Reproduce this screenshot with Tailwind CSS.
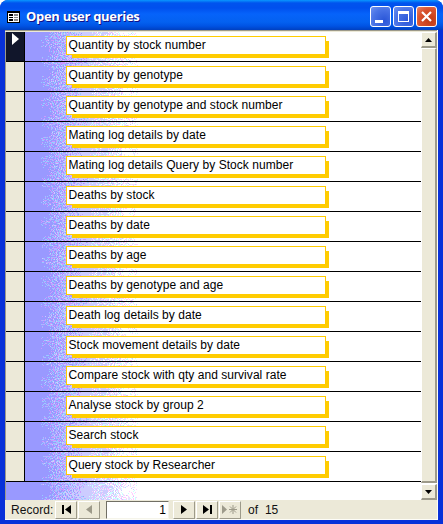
<!DOCTYPE html>
<html><head><meta charset="utf-8"><script src="https://cdn.jsdelivr.net/npm/@tailwindcss/browser@4"></script></head>
<body class="bg-white overflow-hidden">
<svg width="0" height="0" class="absolute"><filter id="dither" x="0" y="0" width="100%" height="100%" color-interpolation-filters="sRGB"><feTurbulence type="fractalNoise" baseFrequency="0.95" numOctaves="1" seed="4" stitchTiles="noStitch" result="n"/><feColorMatrix in="n" type="matrix" values="3.2 0 0 0 -1.1  0 3.2 0 0 -1.1  0 0 0 0 0.5  0 0 0 0 1" result="m"/><feComposite in="SourceGraphic" in2="m" operator="arithmetic" k1="0" k2="1" k3="0.2" k4="-0.1" result="c"/><feComponentTransfer in="c"><feFuncR type="discrete" tableValues=".6 .6 .6 .6 .6 .6 .6 .8 .8 1"/><feFuncG type="discrete" tableValues=".6 .6 .6 .6 .6 .6 .6 .8 .8 1"/><feFuncB type="discrete" tableValues="1"/></feComponentTransfer></filter></svg>
<div class="w-[443px] h-[524px] flex flex-col rounded-t-[8px] overflow-hidden bg-[#0831d9] font-['Liberation_Sans',sans-serif] text-[12px] tracking-[0.05px] text-black">
  <div class="h-[30px] shrink-0 flex items-center pl-[7px] pr-[6px] pt-[3px] bg-[linear-gradient(180deg,#0997ff_0px,#0053ee_3px,#0050ee_8px,#0663fa_14px,#0461f0_22px,#0053e4_26px,#0040c0_30px)]">
    <svg width="13" height="12" viewBox="0 0 13 12" class="mr-[6px]"><rect width="13" height="12" fill="#000"/><rect x="1" y="2" width="11" height="9" fill="#fff"/><rect x="2" y="3" width="4" height="2" fill="#000"/><rect x="7" y="3" width="4" height="2" fill="#888"/><rect x="2" y="6" width="4" height="1" fill="#000"/><rect x="7" y="6" width="4" height="1" fill="#888"/><rect x="2" y="8" width="4" height="2" fill="#000"/><rect x="7" y="8" width="4" height="2" fill="#888"/></svg>
    <span class="font-bold text-[13px] tracking-[-0.3px] text-white [text-shadow:1px_1px_0_#0f1089] font-['Open_Sans',sans-serif]">Open user queries</span>
    <div class="ml-auto flex gap-[2px] mt-[-1px]">
      <div class="w-[21px] h-[21px] rounded-[3px] border border-white bg-[radial-gradient(circle_at_70%_70%,#2a56d8,#4a74e6_60%,#6f93f0)] flex items-end pl-[4px] pb-[3px]"><div class="w-[8px] h-[3px] bg-white"></div></div>
      <div class="w-[21px] h-[21px] rounded-[3px] border border-white bg-[radial-gradient(circle_at_70%_70%,#2a56d8,#4a74e6_60%,#6f93f0)] flex items-center justify-center"><div class="w-[11px] h-[11px] border border-white border-t-[3px]"></div></div>
      <div class="w-[21px] h-[21px] rounded-[3px] border border-white bg-[radial-gradient(circle_at_70%_70%,#c03a14,#d9532f_60%,#e8866a)] flex items-center justify-center"><svg width="11" height="11" viewBox="0 0 11 11"><path d="M1 1L10 10M10 1L1 10" stroke="#fff" stroke-width="2.2"/></svg></div>
    </div>
  </div>
  <div class="mx-[5px] mb-[4px] flex-1 flex flex-col bg-[#ece9d8] min-h-0 border-r border-b border-[#fdfdf8]">
    <div class="h-[2px] bg-[#9d9a8a] border-b border-b-[#ece9d8] shrink-0"></div>
    <div class="flex h-[468px] shrink-0 border-l border-[#9d9a8a]">
      <div class="relative flex-1 flex flex-col">
        <div class="absolute inset-0 bg-[linear-gradient(90deg,#9494ff_0px,#9494ff_30px,#ffffff_132px)] [filter:url(#dither)]"></div>
        <div class="relative flex h-[30px] border-b border-black"><div class="w-[19px] bg-[#11162b] border-r border-black flex justify-center pt-[1px]"><svg width="7" height="12" viewBox="0 0 7 12"><path d="M0 0L7 6L0 12Z" fill="#fff"/></svg></div><div class="flex-1 pl-[41px] pt-[4px]"><div class="relative w-[260px] h-[19px]"><div class="absolute left-[6px] top-[5px] w-[257px] h-[17px] bg-[#ffcc00]"></div><div class="relative h-[19px] border border-[#ffcc00] bg-white pl-[1.5px] leading-[16px]">Quantity by stock number</div></div></div></div>
        <div class="relative flex h-[30px] border-b border-black"><div class="w-[19px] bg-[#ece9d8] border-r border-black"></div><div class="flex-1 pl-[41px] pt-[4px]"><div class="relative w-[260px] h-[19px]"><div class="absolute left-[6px] top-[5px] w-[257px] h-[17px] bg-[#ffcc00]"></div><div class="relative h-[19px] border border-[#ffcc00] bg-white pl-[1.5px] leading-[16px]">Quantity by genotype</div></div></div></div>
        <div class="relative flex h-[30px] border-b border-black"><div class="w-[19px] bg-[#ece9d8] border-r border-black"></div><div class="flex-1 pl-[41px] pt-[4px]"><div class="relative w-[260px] h-[19px]"><div class="absolute left-[6px] top-[5px] w-[257px] h-[17px] bg-[#ffcc00]"></div><div class="relative h-[19px] border border-[#ffcc00] bg-white pl-[1.5px] leading-[16px]">Quantity by genotype and stock number</div></div></div></div>
        <div class="relative flex h-[30px] border-b border-black"><div class="w-[19px] bg-[#ece9d8] border-r border-black"></div><div class="flex-1 pl-[41px] pt-[4px]"><div class="relative w-[260px] h-[19px]"><div class="absolute left-[6px] top-[5px] w-[257px] h-[17px] bg-[#ffcc00]"></div><div class="relative h-[19px] border border-[#ffcc00] bg-white pl-[1.5px] leading-[16px]">Mating log details by date</div></div></div></div>
        <div class="relative flex h-[30px] border-b border-black"><div class="w-[19px] bg-[#ece9d8] border-r border-black"></div><div class="flex-1 pl-[41px] pt-[4px]"><div class="relative w-[260px] h-[19px]"><div class="absolute left-[6px] top-[5px] w-[257px] h-[17px] bg-[#ffcc00]"></div><div class="relative h-[19px] border border-[#ffcc00] bg-white pl-[1.5px] leading-[16px]">Mating log details Query by Stock number</div></div></div></div>
        <div class="relative flex h-[30px] border-b border-black"><div class="w-[19px] bg-[#ece9d8] border-r border-black"></div><div class="flex-1 pl-[41px] pt-[4px]"><div class="relative w-[260px] h-[19px]"><div class="absolute left-[6px] top-[5px] w-[257px] h-[17px] bg-[#ffcc00]"></div><div class="relative h-[19px] border border-[#ffcc00] bg-white pl-[1.5px] leading-[16px]">Deaths by stock</div></div></div></div>
        <div class="relative flex h-[30px] border-b border-black"><div class="w-[19px] bg-[#ece9d8] border-r border-black"></div><div class="flex-1 pl-[41px] pt-[4px]"><div class="relative w-[260px] h-[19px]"><div class="absolute left-[6px] top-[5px] w-[257px] h-[17px] bg-[#ffcc00]"></div><div class="relative h-[19px] border border-[#ffcc00] bg-white pl-[1.5px] leading-[16px]">Deaths by date</div></div></div></div>
        <div class="relative flex h-[30px] border-b border-black"><div class="w-[19px] bg-[#ece9d8] border-r border-black"></div><div class="flex-1 pl-[41px] pt-[4px]"><div class="relative w-[260px] h-[19px]"><div class="absolute left-[6px] top-[5px] w-[257px] h-[17px] bg-[#ffcc00]"></div><div class="relative h-[19px] border border-[#ffcc00] bg-white pl-[1.5px] leading-[16px]">Deaths by age</div></div></div></div>
        <div class="relative flex h-[30px] border-b border-black"><div class="w-[19px] bg-[#ece9d8] border-r border-black"></div><div class="flex-1 pl-[41px] pt-[4px]"><div class="relative w-[260px] h-[19px]"><div class="absolute left-[6px] top-[5px] w-[257px] h-[17px] bg-[#ffcc00]"></div><div class="relative h-[19px] border border-[#ffcc00] bg-white pl-[1.5px] leading-[16px]">Deaths by genotype and age</div></div></div></div>
        <div class="relative flex h-[30px] border-b border-black"><div class="w-[19px] bg-[#ece9d8] border-r border-black"></div><div class="flex-1 pl-[41px] pt-[4px]"><div class="relative w-[260px] h-[19px]"><div class="absolute left-[6px] top-[5px] w-[257px] h-[17px] bg-[#ffcc00]"></div><div class="relative h-[19px] border border-[#ffcc00] bg-white pl-[1.5px] leading-[16px]">Death log details by date</div></div></div></div>
        <div class="relative flex h-[30px] border-b border-black"><div class="w-[19px] bg-[#ece9d8] border-r border-black"></div><div class="flex-1 pl-[41px] pt-[4px]"><div class="relative w-[260px] h-[19px]"><div class="absolute left-[6px] top-[5px] w-[257px] h-[17px] bg-[#ffcc00]"></div><div class="relative h-[19px] border border-[#ffcc00] bg-white pl-[1.5px] leading-[16px]">Stock movement details by date</div></div></div></div>
        <div class="relative flex h-[30px] border-b border-black"><div class="w-[19px] bg-[#ece9d8] border-r border-black"></div><div class="flex-1 pl-[41px] pt-[4px]"><div class="relative w-[260px] h-[19px]"><div class="absolute left-[6px] top-[5px] w-[257px] h-[17px] bg-[#ffcc00]"></div><div class="relative h-[19px] border border-[#ffcc00] bg-white pl-[1.5px] leading-[16px]">Compare stock with qty and survival rate</div></div></div></div>
        <div class="relative flex h-[30px] border-b border-black"><div class="w-[19px] bg-[#ece9d8] border-r border-black"></div><div class="flex-1 pl-[41px] pt-[4px]"><div class="relative w-[260px] h-[19px]"><div class="absolute left-[6px] top-[5px] w-[257px] h-[17px] bg-[#ffcc00]"></div><div class="relative h-[19px] border border-[#ffcc00] bg-white pl-[1.5px] leading-[16px]">Analyse stock by group 2</div></div></div></div>
        <div class="relative flex h-[30px] border-b border-black"><div class="w-[19px] bg-[#ece9d8] border-r border-black"></div><div class="flex-1 pl-[41px] pt-[4px]"><div class="relative w-[260px] h-[19px]"><div class="absolute left-[6px] top-[5px] w-[257px] h-[17px] bg-[#ffcc00]"></div><div class="relative h-[19px] border border-[#ffcc00] bg-white pl-[1.5px] leading-[16px]">Search stock</div></div></div></div>
        <div class="relative flex h-[30px] border-b border-black"><div class="w-[19px] bg-[#ece9d8] border-r border-black"></div><div class="flex-1 pl-[41px] pt-[4px]"><div class="relative w-[260px] h-[19px]"><div class="absolute left-[6px] top-[5px] w-[257px] h-[17px] bg-[#ffcc00]"></div><div class="relative h-[19px] border border-[#ffcc00] bg-white pl-[1.5px] leading-[16px]">Query stock by Researcher</div></div></div></div>
      </div>
      <div class="w-[16px] shrink-0 flex flex-col bg-[#ece9d8]">
        <div class="h-[16px] border-l border-t border-white border-r-2 border-b-2 border-r-[#9d9a8a] border-b-[#9d9a8a] flex items-center justify-center"><svg width="7" height="4" viewBox="0 0 7 4"><path d="M3.5 0L7 4H0Z" fill="#000"/></svg></div>
        <div class="flex-1 border-l border-t border-white border-r-2 border-b-2 border-r-[#9d9a8a] border-b-[#9d9a8a]"></div>
        <div class="h-[1px] bg-white"></div>
        <div class="h-[16px] border-l border-t border-white border-r-2 border-b-2 border-r-[#9d9a8a] border-b-[#9d9a8a] flex items-center justify-center"><svg width="7" height="4" viewBox="0 0 7 4"><path d="M3.5 4L7 0H0Z" fill="#000"/></svg></div>
      </div>
    </div>
    <div class="flex-1 flex items-center">
      <span class="ml-[6px] w-[44px] text-[#111]">Record:</span>
      <div class="h-[18px] w-[22px] border-l border-t border-white border-r border-b border-r-[#9d9a8a] border-b-[#9d9a8a] flex items-center justify-center"><svg width="9" height="9" viewBox="0 0 9 9"><path d="M0 0H2V9H0ZM9 0V9L3 4.5Z" fill="#000"/></svg></div>
      <div class="ml-[1px] h-[18px] w-[22px] border-l border-t border-white border-r border-b border-r-[#9d9a8a] border-b-[#9d9a8a] flex items-center justify-center"><svg width="6" height="9" viewBox="0 0 6 9"><path d="M6 0V9L0 4.5Z" fill="#9d9a8a"/></svg></div>
      <div class="ml-[6px] h-[18px] w-[63px] bg-white border-l border-t border-[#716f64] border-r border-b border-r-[#f5f4ea] border-b-[#f5f4ea] text-right pr-[2px] leading-[17px]">1</div>
      <div class="ml-[4px] h-[18px] w-[22px] border-l border-t border-white border-r border-b border-r-[#9d9a8a] border-b-[#9d9a8a] flex items-center justify-center"><svg width="6" height="9" viewBox="0 0 6 9"><path d="M0 0V9L6 4.5Z" fill="#000"/></svg></div>
      <div class="ml-[1px] h-[18px] w-[22px] border-l border-t border-white border-r border-b border-r-[#9d9a8a] border-b-[#9d9a8a] flex items-center justify-center"><svg width="9" height="9" viewBox="0 0 9 9"><path d="M0 0V9L6 4.5ZM7 0H9V9H7Z" fill="#000"/></svg></div>
      <div class="ml-[1px] h-[18px] w-[22px] border-l border-t border-white border-r border-b border-r-[#9d9a8a] border-b-[#9d9a8a] flex items-center justify-center"><svg width="16" height="11" viewBox="0 0 16 11"><path d="M0 1V10L5 5.5Z" fill="#9d9a8a"/><path d="M11 1V10M7 5.5H15M8 2.5L14 8.5M14 2.5L8 8.5" stroke="#9d9a8a" fill="none"/></svg></div>
      <span class="ml-[7px] text-[#111] whitespace-pre">of  15</span>
    </div>
  </div>
</div>
</body></html>
